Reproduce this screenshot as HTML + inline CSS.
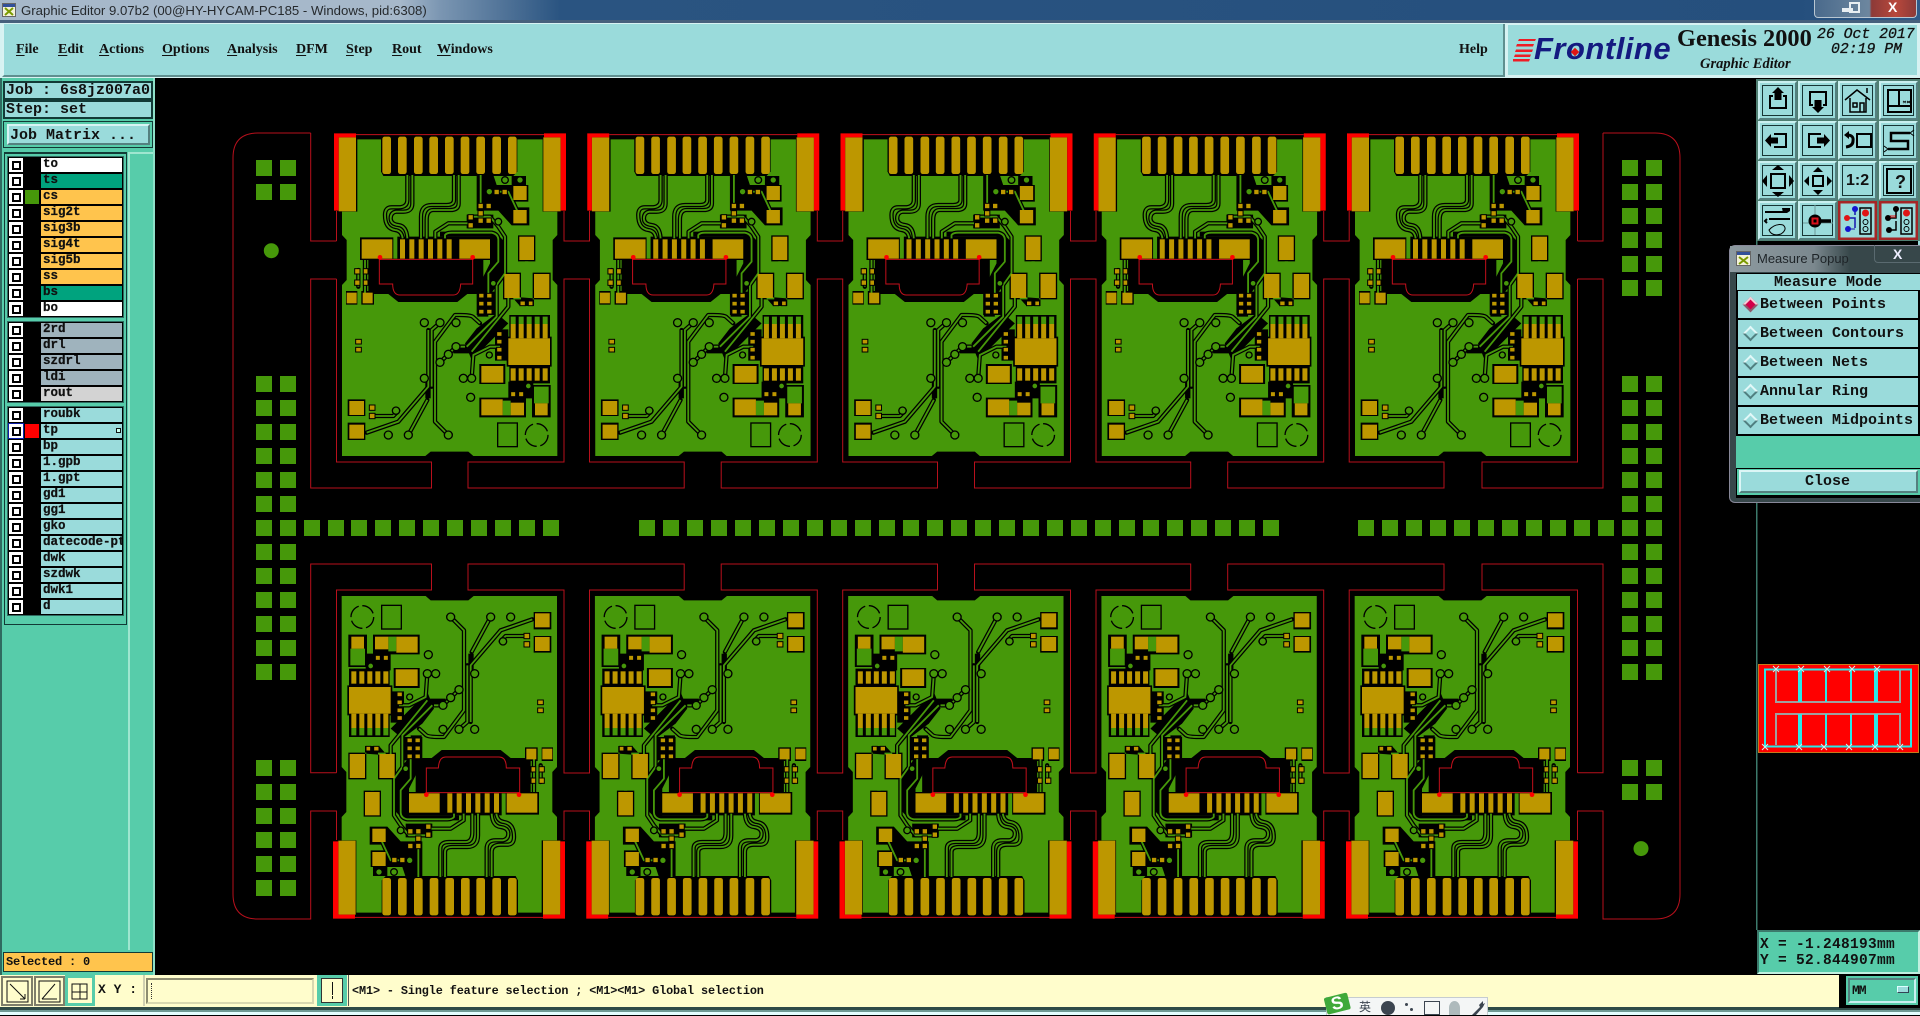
<!DOCTYPE html>
<html><head><meta charset="utf-8"><title>Graphic Editor</title>
<style>
html,body{margin:0;padding:0;background:#000;width:1920px;height:1015px;overflow:hidden}
div,span{position:absolute;box-sizing:border-box}
svg{position:absolute;left:0;top:0}
.m{font:bold 15px "Liberation Mono",monospace;color:#111;white-space:pre;line-height:16px}
.mn{font:bold 14px "Liberation Serif",serif;color:#111;top:42px;white-space:pre}
.mn u{text-underline-offset:2px}
.l{height:14px;width:81px;left:41px;font:bold 12.5px/13px "Liberation Mono",monospace;color:#111;padding-left:2px;overflow:hidden;white-space:pre;-webkit-text-stroke:.25px #111}
.cb{left:9px;width:14px;height:14px;background:#fff}
.cb:after{content:"";position:absolute;left:2.5px;top:2.5px;width:9px;height:9px;border:2px solid #000;box-sizing:border-box;background:#fff}
.g{left:7px;width:117px;background:#000;border:1px solid #2f6a60}
.w{background:#fff}.t{background:#00a37e}.o{background:#ffc44d}.b{background:#9fb3bd}.c{background:#9adbdb}
.r{left:1738px;width:180px;height:27px;background:#9adbdb}
.r .m{left:22px;top:6px}
.d{left:7px;top:8px;width:11px;height:11px;transform:rotate(45deg);background:#9adbdb;border:2px solid;border-color:#e2f8f8 #507f80 #507f80 #e2f8f8}
.bt{width:39px;height:39px;background:#9adbdb;border:2px solid;border-color:#c9f0f0 #54807f #54807f #c9f0f0}
.bt i{position:absolute;left:2px;top:2px;width:31px;height:31px;border:1.5px solid #173535;box-sizing:border-box;display:block}
.bt svg{left:-2px;top:-2px}
</style></head><body>

<!-- title bar -->
<div style="left:0;top:0;width:1920px;height:21px;background:linear-gradient(90deg,#a6b8ca 0,#a6b8ca 400px,#7b96b2 440px,#2a5481 560px,#254f7d 1800px,#2f5a88 1920px)"></div>
<div style="left:0;top:20px;width:1920px;height:3px;background:#46607c"></div>
<div style="left:0;top:23px;width:1920px;height:55px;background:#d7f2f2"></div>
<svg width="16" height="16" style="left:2px;top:3px"><rect x=".5" y=".5" width="13" height="13" fill="#f4f3d8" stroke="#666"/><rect x="1" y="1" width="12" height="3" fill="#32509a"/><path d="M3 5L11 12M11 5L3 12" stroke="#7a9a00" stroke-width="2"/></svg>
<div style="left:21px;top:2px;font:13.2px/17px 'Liberation Sans',sans-serif;color:#262a2e;white-space:pre">Graphic Editor 9.07b2 (00@HY-HYCAM-PC185 - Windows, pid:6308)</div>
<div style="left:1814px;top:0;width:103px;height:18px;background:linear-gradient(90deg,#4a6a8c 0,#6d879f 54%,#8c3a38 56%,#b8483c 80%,#8c3a38 100%);border:1px solid #b8c6d2;border-top:0;border-radius:0 0 4px 4px"></div>
<div style="left:1842px;top:8px;width:11px;height:4px;background:#e8eef2"></div>
<div style="left:1849px;top:2px;width:11px;height:11px;border:2px solid #e8eef2"></div>
<div style="left:1888px;top:0;font:bold 14px/15px 'Liberation Sans',sans-serif;color:#fff">X</div>

<!-- menu bar -->
<div style="left:2px;top:24px;width:1503px;height:53px;background:#9adbdb;border-left:2px solid #d9f3f3;border-right:2px solid #5f8f8f;border-bottom:2px solid #5f8f8f"></div>
<div class="mn" style="left:16px"><u>F</u>ile</div>
<div class="mn" style="left:58px"><u>E</u>dit</div>
<div class="mn" style="left:99px"><u>A</u>ctions</div>
<div class="mn" style="left:162px"><u>O</u>ptions</div>
<div class="mn" style="left:227px"><u>A</u>nalysis</div>
<div class="mn" style="left:296px"><u>D</u>FM</div>
<div class="mn" style="left:346px"><u>S</u>tep</div>
<div class="mn" style="left:392px"><u>R</u>out</div>
<div class="mn" style="left:437px"><u>W</u>indows</div>
<div class="mn" style="left:1459px">Help</div>

<!-- frontline panel -->
<div style="left:1508px;top:25px;width:409px;height:50px;background:#9adbdb"></div>
<svg width="30" height="30" style="left:1510px;top:36px"><path d="M9 3L26 3L25 5H8ZM7 8H24L23 10.500H6ZM6 13.500H23L22 16H5ZM5 18.500H21L20 21H4ZM3 23H20L19 25.500H3Z" fill="#ee1c25"/></svg>
<div style="left:1534px;top:31px;font:italic bold 31px/36px 'Liberation Sans',sans-serif;color:#141a80;white-space:pre;letter-spacing:.5px">Frontline</div>
<div style="left:1572px;top:49px;width:6px;height:6px;background:#e01414;transform:rotate(45deg)"></div>
<div style="left:1677px;top:26px;font:bold 24.400px/26px 'Liberation Serif',serif;color:#111;white-space:pre">Genesis 2000</div>
<div style="left:1700px;top:56px;font:italic bold 14.500px/16px 'Liberation Serif',serif;color:#111;white-space:pre">Graphic Editor</div>
<div class="m" style="left:1817px;top:27px;font-style:italic;font-weight:normal;font-size:14.800px;-webkit-text-stroke:.3px #111">26 Oct 2017</div>
<div class="m" style="left:1831px;top:42px;font-style:italic;font-weight:normal;font-size:14.800px;-webkit-text-stroke:.3px #111">02:19 PM</div>

<!-- left panel -->
<div style="left:0;top:78px;width:155px;height:897px;background:#57ccaa;border-left:2px solid #2f6a60;border-right:2px solid #8ee0c8"></div>
<div style="left:3px;top:81px;width:150px;height:19px;background:#9adbdb;border:2px solid #123a36"></div>
<div class="m" style="left:6px;top:83px">Job : 6s8jz007a0</div>
<div style="left:3px;top:100px;width:150px;height:19px;background:#9adbdb;border:2px solid #123a36"></div>
<div class="m" style="left:6px;top:102px">Step: set</div>
<div style="left:3px;top:121px;width:150px;height:27px;background:#57ccaa;border:1px solid #123a36"></div>
<div style="left:7px;top:124px;width:143px;height:21px;background:#9adbdb;border:2px solid;border-color:#d8f4f4 #54807f #54807f #d8f4f4"></div>
<div class="m" style="left:10px;top:127px;top:128px">Job Matrix ...</div>
<div style="left:128px;top:152px;width:25px;height:798px;background:#57ccaa;border-left:2px solid #9fe6d0;border-top:2px solid #9fe6d0"></div>
<div style="left:4px;top:152px;width:123px;height:473px;background:#57ccaa;border:1px solid #123a36;border-top:2px solid #123a36"></div>

<div class="g" style="top:156px;height:162px"></div>
<div class="g" style="top:321px;height:82px"></div>
<div class="g" style="top:406px;height:210px"></div>

<div class="cb" style="top:158px"></div><div class="l w" style="top:158px">to</div>
<div class="cb" style="top:174px"></div><div class="l t" style="top:174px">ts</div>
<div class="cb" style="top:190px"></div><div style="left:25px;top:190px;width:14px;height:14px;background:#46980a"></div><div class="l o" style="top:190px">cs</div>
<div class="cb" style="top:206px"></div><div class="l o" style="top:206px">sig2t</div>
<div class="cb" style="top:222px"></div><div class="l o" style="top:222px">sig3b</div>
<div class="cb" style="top:238px"></div><div class="l o" style="top:238px">sig4t</div>
<div class="cb" style="top:254px"></div><div class="l o" style="top:254px">sig5b</div>
<div class="cb" style="top:270px"></div><div class="l o" style="top:270px">ss</div>
<div class="cb" style="top:286px"></div><div class="l t" style="top:286px">bs</div>
<div class="cb" style="top:302px"></div><div class="l w" style="top:302px">bo</div>

<div class="cb" style="top:323px"></div><div class="l b" style="top:323px">2rd</div>
<div class="cb" style="top:339px"></div><div class="l b" style="top:339px">drl</div>
<div class="cb" style="top:355px"></div><div class="l b" style="top:355px">szdrl</div>
<div class="cb" style="top:371px"></div><div class="l b" style="top:371px">ldi</div>
<div class="cb" style="top:387px"></div><div class="l" style="top:387px;background:#d3d3d3">rout</div>

<div class="cb" style="top:408px"></div><div class="l c" style="top:408px">roubk</div>
<div style="left:8px;top:423px;width:16px;height:16px;background:#0b1ea8"></div><div class="cb" style="top:424px"></div><div style="left:25px;top:424px;width:14px;height:14px;background:#f00"></div><div class="l c" style="top:424px">tp</div>
<div style="left:116px;top:428px;width:5px;height:5px;border:1px solid #111;background:#cfe"></div>
<div class="cb" style="top:440px"></div><div class="l c" style="top:440px">bp</div>
<div class="cb" style="top:456px"></div><div class="l c" style="top:456px">1.gpb</div>
<div class="cb" style="top:472px"></div><div class="l c" style="top:472px">1.gpt</div>
<div class="cb" style="top:488px"></div><div class="l c" style="top:488px">gd1</div>
<div class="cb" style="top:504px"></div><div class="l c" style="top:504px">gg1</div>
<div class="cb" style="top:520px"></div><div class="l c" style="top:520px">gko</div>
<div class="cb" style="top:536px"></div><div class="l c" style="top:536px">datecode-pte</div>
<div class="cb" style="top:552px"></div><div class="l c" style="top:552px">dwk</div>
<div class="cb" style="top:568px"></div><div class="l c" style="top:568px">szdwk</div>
<div class="cb" style="top:584px"></div><div class="l c" style="top:584px">dwk1</div>
<div class="cb" style="top:600px"></div><div class="l c" style="top:600px">d</div>

<div style="left:3px;top:952px;width:150px;height:20px;background:#ffc44d;border:1px solid #123a36"></div>
<div class="m" style="left:6px;top:954px;font-size:12px;letter-spacing:-.2px">Selected : 0</div>

<!-- PCB canvas -->
<svg width="1920" height="1015" viewBox="0 0 1920 1015" style="pointer-events:none">
<defs>
<pattern id="p" width="24" height="24" patternUnits="userSpaceOnUse"><rect width="16" height="16" fill="#46980a"/></pattern>
<g id="tr">
<path d="M262 165V240Q262 262 235 262H215Q195 262 195 285Q195 325 225 330Q245 332 248 355"/>
<path d="M277 165V250Q277 275 250 275H228Q212 278 212 295Q212 312 235 315Q260 318 262 355"/>
<path d="M402 165V240Q402 255 380 255H335Q303 255 303 290V355"/>
<path d="M416 165V250Q416 270 390 270H340Q320 270 320 300V355"/>
<path d="M346 355V335L385 310H445"/>
<path d="M482 165V260"/>
<path d="M375 355V345Q380 338 395 338H515Q535 342 535 360V425L505 460V525"/>
<path d="M455 290H510L535 320L555 350V460L530 495V590L440 680"/>
<path d="M565 465V560L455 695"/>
<path d="M480 610L458 590Q450 585 420 585H405L345 665V905L385 945"/>
<path d="M360 608L335 630V800"/>
<path d="M325 630V800L235 905L140 938"/>
<path d="M322 840L265 945"/>
<path d="M155 888H220L235 872"/>
<path d="M360 727L385 703L408 680H435"/>
<path d="M430 775H455L460 705L510 680H540"/>
<path d="M530 215H565L600 290"/>
<path d="M115 450V500"/>
<path d="M135 420V525"/>
</g>
<g id="board">
<path fill="#46980a" d="M112 58H668V275H712V345L698 360V480L712 495V1008H460L445 995H332L316 1008H66V495L80 480V360L66 345V275H112Z"/>
<g fill="#000">
<path d="M183 44H592V155L580 168H190L183 155Z"/>
<path d="M470 165H520L530 195H575V168H618V195H625V245H580L590 262H628V316H575L535 272H470Z"/>
<path d="M440 284H520V325H440Z"/>
<path d="M360 335H525L556 368V465L505 530V590H472V520L490 470L510 430V350H360Z"/>
<path d="M120 352H220V420H120Z"/>
<path d="M232 350H520V420H232Z"/>
<path d="M145 416H490V505L470 522H442L412 546H235L205 522H145Z"/>
<path d="M78 513H112V554H78ZM124 513H162V554H124Z"/>
<path d="M470 515H525V585H470Z"/>
<path d="M549 458H603V538H549ZM638 458H692V538H638ZM575 530L600 558H642V535Z"/>
<path d="M594 346H646V424H594Z"/>
<path d="M568 585H690V655H568Z"/>
<path d="M560 650H695V740H560Z"/>
<path d="M568 735H690V790H568Z"/>
<path d="M525 628H565V722H525Z"/>
<path d="M435 670L470 625L530 580L565 610L455 720Z"/>
<path d="M478 732H556V792H478Z"/>
<path d="M478 833H618V892H478Z"/>
<path d="M636 795H692V892H636Z"/>
<path d="M565 785H640V835H565Z"/>
<path d="M83 838H136V888H83Z"/>
<path d="M83 908H136V960H83Z"/>
<path d="M316 770H332V835H316Z"/>
<path d="M400 675H450V700H400Z"/>
</g>
<path fill="#46980a" d="M548 842H572V848H572V886H548ZM642 800H686V850H642Z"/>
<path fill="none" stroke="#46980a" stroke-width="10" d="M620 424V458"/>
<g fill="none" stroke="#000" stroke-width="13" stroke-linecap="round" stroke-linejoin="round"><use href="#tr"/></g>
<g fill="none" stroke="#46980a" stroke-width="5.500" stroke-linejoin="round"><use href="#tr"/></g>
<!-- vias -->
<g fill="#46980a" stroke="#000" stroke-width="4">
<circle cx="313" cy="608" r="12"/><circle cx="360" cy="608" r="12"/><circle cx="408" cy="608" r="12"/><circle cx="408" cy="680" r="12"/><circle cx="385" cy="703" r="12"/><circle cx="360" cy="727" r="12"/><circle cx="313" cy="775" r="12"/><circle cx="430" cy="775" r="12"/><circle cx="455" cy="775" r="12"/><circle cx="452" cy="832" r="12"/><circle cx="205" cy="945" r="12"/><circle cx="265" cy="945" r="12"/><circle cx="385" cy="945" r="12"/><circle cx="535" cy="305" r="10"/><circle cx="555" cy="180" r="10"/><circle cx="600" cy="180" r="10"/><circle cx="508" cy="215" r="10"/><circle cx="228" cy="872" r="11"/><circle cx="520" cy="490" r="9"/><circle cx="508" cy="705" r="9"/><circle cx="625" cy="798" r="9"/>
</g>
<!-- gold -->
<g fill="#bd9700">
<rect x="187" y="50" width="26" height="112" rx="7"/><rect x="234" y="50" width="26" height="112" rx="7"/><rect x="282" y="50" width="26" height="112" rx="7"/><rect x="328" y="50" width="26" height="112" rx="7"/><rect x="375" y="50" width="26" height="112" rx="7"/><rect x="422" y="50" width="26" height="112" rx="7"/><rect x="469" y="50" width="26" height="112" rx="7"/><rect x="517" y="50" width="26" height="112" rx="7"/><rect x="564" y="50" width="26" height="112" rx="7"/>
<rect x="56" y="52" width="52" height="222"/><rect x="670" y="52" width="52" height="222"/>
<rect x="125" y="358" width="92" height="58"/><rect x="418" y="358" width="92" height="58"/>
<rect x="240" y="358" width="15" height="58"/><rect x="268" y="358" width="15" height="58"/><rect x="296" y="358" width="15" height="58"/><rect x="324" y="358" width="15" height="58"/><rect x="352" y="358" width="15" height="58"/><rect x="380" y="358" width="15" height="58"/>
<rect x="580" y="198" width="40" height="42"/><rect x="580" y="270" width="40" height="40"/>
<rect x="598" y="350" width="44" height="70"/><rect x="553" y="462" width="46" height="72"/><rect x="642" y="462" width="46" height="72"/>
<rect x="565" y="655" width="125" height="80"/>
<rect x="572" y="612" width="15" height="43"/><rect x="596" y="612" width="15" height="43"/><rect x="620" y="612" width="15" height="43"/><rect x="644" y="612" width="15" height="43"/><rect x="668" y="612" width="15" height="43"/>
<rect x="572" y="745" width="15" height="37"/><rect x="596" y="745" width="15" height="37"/><rect x="620" y="745" width="15" height="37"/><rect x="644" y="745" width="15" height="37"/><rect x="668" y="745" width="15" height="37"/>
<rect x="484" y="738" width="66" height="50"/><rect x="484" y="838" width="64" height="48"/><rect x="572" y="848" width="40" height="38"/><rect x="645" y="850" width="38" height="36"/>
<rect x="88" y="843" width="44" height="42"/><rect x="88" y="914" width="44" height="42"/>
<rect x="80" y="518" width="30" height="32"/><rect x="128" y="518" width="30" height="32"/>
</g>
<g fill="#bd9700" stroke="#000" stroke-width="3">
<rect x="107" y="658" width="17" height="14"/><rect x="107" y="682" width="17" height="14"/>
<rect x="104" y="446" width="16" height="16"/><rect x="104" y="480" width="16" height="16"/><rect x="130" y="446" width="14" height="16"/><rect x="130" y="480" width="14" height="16"/>
<rect x="148" y="855" width="17" height="16"/><rect x="148" y="880" width="17" height="16"/>
<rect x="474" y="250" width="16" height="16"/><rect x="498" y="250" width="16" height="16"/><rect x="474" y="272" width="16" height="16"/><rect x="498" y="294" width="16" height="16"/><rect x="474" y="294" width="16" height="16"/><rect x="444" y="284" width="16" height="16"/><rect x="444" y="308" width="16" height="16"/>
<rect x="522" y="208" width="16" height="16"/><rect x="546" y="208" width="16" height="16"/>
<rect x="476" y="520" width="16" height="14"/><rect x="500" y="520" width="16" height="14"/><rect x="476" y="544" width="16" height="14"/><rect x="500" y="544" width="16" height="14"/><rect x="476" y="568" width="16" height="14"/><rect x="500" y="568" width="16" height="14"/>
<rect x="530" y="635" width="16" height="14"/><rect x="530" y="658" width="16" height="14"/><rect x="530" y="682" width="16" height="14"/><rect x="530" y="706" width="16" height="14"/>
<rect x="600" y="543" width="16" height="14"/><rect x="625" y="543" width="14" height="14"/>
<rect x="572" y="815" width="15" height="15"/><rect x="596" y="815" width="15" height="15"/>
</g>
<path fill="#46980a" d="M572 590H587V612H572ZM596 590H611V612H596ZM620 590H635V612H620ZM644 590H659V612H644ZM668 590H683V612H668Z"/>
<rect x="533" y="909" width="59" height="71" fill="none" stroke="#000" stroke-width="4"/>
<circle cx="650" cy="945" r="34" fill="none" stroke="#000" stroke-width="4" stroke-dasharray="42 11"/>
<!-- red -->
<path fill="#f00" d="M42 40H108V52H56V272H42ZM672 40H738V272H722V52H672Z"/>
<path fill="none" stroke="#c3101c" stroke-width="3" d="M108 44H672M178 412V492H218Q218 525 240 525H400Q420 525 422 492H458V412M180 418H458"/>
<circle cx="180" cy="412" r="7" fill="#f00"/><circle cx="458" cy="412" r="7" fill="#f00"/>
</g>
</defs>

<!-- rout outline -->
<g fill="none" stroke="#b8101c" stroke-width="1">
<path d="M310.700 133H258Q233 133 233 158V894Q233 919 258 919H310.700V811H336.500V840M336.500 772.700H310.700V564H431.500V590H336.500V772.700M336.500 279H310.700V488H431.500V462H336.500V279M336.500 241H310.700V133"/>
<path d="M1603 133H1655Q1680 133 1680 158V894Q1680 919 1655 919H1603V811H1577.500V840M1577.500 772.700H1603V564H1482V590H1577.500V772.700M1577.500 279H1603V488H1482V462H1577.500V279M1577.500 241H1603V133"/>
<path d="M336.500 211V241M1577.500 211V241"/>
<path d="M468 488H684.200V462H589.500V279H564V462H468ZM721.200 488H937.500V462H842.700V279H817.300V462H721.200ZM974.500 488H1190.700V462H1096V279H1070.500V462H974.500ZM1227.700 488H1444V462H1349.200V279H1323.700V462H1227.700Z"/>
<path d="M468 564H684.200V590H589.500V773H564V590H468ZM721.200 564H937.500V590H842.700V773H817.300V590H721.200ZM974.500 564H1190.700V590H1096V773H1070.500V590H974.500ZM1227.700 564H1444V590H1349.200V773H1323.700V590H1227.700Z"/>
<path d="M564 211V241H589.500V211M817.300 211V241H842.700V211M1070.500 211V241H1096V211M1323.700 211V241H1349.200V211"/>
<path d="M564 840V811H589.500V840M817.300 840V811H842.700V840M1070.500 840V811H1096V840M1323.700 840V811H1349.200V840"/>
</g>

<!-- pads -->
<rect x="0" y="0" width="40" height="40" transform="translate(256 160)" fill="url(#p)"/>
<rect x="0" y="0" width="40" height="304" transform="translate(256 376)" fill="url(#p)"/>
<rect x="0" y="0" width="40" height="136" transform="translate(256 760)" fill="url(#p)"/>
<rect x="0" y="0" width="40" height="136" transform="translate(1622 160)" fill="url(#p)"/>
<rect x="0" y="0" width="40" height="304" transform="translate(1622 376)" fill="url(#p)"/>
<rect x="0" y="0" width="40" height="40" transform="translate(1622 760)" fill="url(#p)"/>
<rect x="0" y="0" width="40" height="16" transform="translate(304 520)" fill="url(#p)"/>
<rect x="0" y="0" width="208" height="16" transform="translate(351 520)" fill="url(#p)"/>
<rect x="0" y="0" width="640" height="16" transform="translate(639 520)" fill="url(#p)"/>
<rect x="0" y="0" width="256" height="16" transform="translate(1358 520)" fill="url(#p)"/>
<circle cx="271.300" cy="250.700" r="7.500" fill="#46980a"/>
<circle cx="1641" cy="848.600" r="7.500" fill="#46980a"/>

<use href="#board" transform="translate(320 120) scale(.33333)"/>
<use href="#board" transform="translate(573.250 120) scale(.33333)"/>
<use href="#board" transform="translate(826.500 120) scale(.33333)"/>
<use href="#board" transform="translate(1079.750 120) scale(.33333)"/>
<use href="#board" transform="translate(1333 120) scale(.33333)"/>
<use href="#board" transform="translate(579 932) scale(-.33333)"/>
<use href="#board" transform="translate(832.250 932) scale(-.33333)"/>
<use href="#board" transform="translate(1085.500 932) scale(-.33333)"/>
<use href="#board" transform="translate(1338.750 932) scale(-.33333)"/>
<use href="#board" transform="translate(1592 932) scale(-.33333)"/>

<!-- right column lines -->
<rect x="1756" y="240" width="1.500" height="690" fill="#3c7a6c"/>
<rect x="1918" y="240" width="2" height="20" fill="#9adbdb"/>

<!-- minimap -->
<rect x="1758.500" y="664.500" width="160" height="88" fill="#f00" stroke="#c7791a"/>
<g fill="none" stroke="#a0a0a0" stroke-width="2">
<path d="M1776 670V702H1900V670M1776 745V714H1900V745"/><path d="M1800 670V702M1826 670V702M1851 670V702M1800 714V745M1826 714V745M1851 714V745"/>
</g>
<g fill="none" stroke="#2ae8e8" stroke-width="2">
<path d="M1765 669.500H1911V746.500H1765Z"/>
<path d="M1826 670V702M1851 670V702M1826 714V745M1851 714V745" />
</g>
<path d="M1800 668V702M1876 668V702M1800 714V746M1876 714V746" stroke="#2ae8e8" stroke-width="4"/>
<g stroke="#d0f0f0" stroke-width="1"><path d="M1773 666L1779 672M1779 666L1773 672M1798 666L1804 672M1804 666L1798 672M1824 666L1830 672M1830 666L1824 672M1849 666L1855 672M1855 666L1849 672M1874 666L1880 672M1880 666L1874 672M1762 744L1768 750M1768 744L1762 750M1796 744L1802 750M1802 744L1796 750M1821 744L1827 750M1827 744L1821 750M1846 744L1852 750M1852 744L1846 750M1872 744L1878 750M1878 744L1872 750M1897 744L1903 750M1903 744L1897 750"/></g>
</svg>

<!-- tool buttons -->
<div style="left:1756px;top:79px;width:164px;height:162px;background:#4f7f72"></div>
<div class="bt" style="left:1758px;top:81px"><i></i><svg width="39" height="39"><path d="M15 15H12V27H28V15H25" fill="none" stroke="#000" stroke-width="2"/><path d="M20 6L26 12H23.500V19H16.500V12H14Z"/></svg></div>
<div class="bt" style="left:1798px;top:81px"><i></i><svg width="39" height="39"><path d="M15 24H12V11H28V24H25" fill="none" stroke="#000" stroke-width="2"/><path d="M20 32L26 26H23.500V19H16.500V26H14Z"/></svg></div>
<div class="bt" style="left:1838px;top:81px"><i></i><svg width="39" height="39"><path d="M7 19L19 9L32 19M12 17V31H28V17M29 12V7M15 22H19V26H15ZM22 22H26V31H22Z" fill="none" stroke="#000" stroke-width="1.500"/></svg></div>
<div class="bt" style="left:1879px;top:81px"><i></i><svg width="39" height="39"><path d="M9 9H32V31H9ZM20 9V25M9 25H32" fill="none" stroke="#000" stroke-width="2"/><path d="M24 20L27 22M27 20L24 22M28 20L31 22M31 20L28 22" stroke="#000" stroke-width=".8"/></svg></div>

<div class="bt" style="left:1758px;top:121px"><i></i><svg width="39" height="39"><path d="M16 13H28V26H16" fill="none" stroke="#000" stroke-width="2"/><path d="M7 19.500L13 13V16.500H20V22.500H13V26Z"/></svg></div>
<div class="bt" style="left:1798px;top:121px"><i></i><svg width="39" height="39"><path d="M23 13H11V26H23" fill="none" stroke="#000" stroke-width="2"/><path d="M32 19.500L26 13V16.500H19V22.500H26V26Z"/></svg></div>
<div class="bt" style="left:1838px;top:121px"><i></i><svg width="39" height="39"><rect x="19" y="13" width="14" height="13" fill="none" stroke="#000" stroke-width="2"/><path d="M9 14Q16 14 15 20Q15 25 8 26" fill="none" stroke="#000" stroke-width="3"/><path d="M6 14L11 10V18Z"/></svg></div>
<div class="bt" style="left:1879px;top:121px"><i></i><svg width="39" height="39"><path d="M31 12H12V20H29V28H9" fill="none" stroke="#000" stroke-width="2.500"/><path d="M35 9L31 12L35 15M5 25L9 28L5 31" fill="none" stroke="#000"/></svg></div>

<div class="bt" style="left:1758px;top:161px"><i></i><svg width="39" height="39"><rect x="13" y="13" width="14" height="14" fill="none" stroke="#000" stroke-width="2"/><path d="M20 4L26 9H14ZM20 36L26 31H14ZM4 20L9 14V26ZM36 20L31 14V26Z"/></svg></div>
<div class="bt" style="left:1798px;top:161px"><i></i><svg width="39" height="39"><rect x="15" y="15" width="10" height="10" fill="none" stroke="#000" stroke-width="2"/><path d="M20 6L25 11H15ZM20 34L25 29H15ZM6 20L11 15V25ZM34 20L29 15V25Z"/></svg></div>
<div class="bt" style="left:1838px;top:161px"><i></i><div style="left:6px;top:9px;font:bold 16px/18px 'Liberation Sans',sans-serif;color:#111">1:2</div></div>
<div class="bt" style="left:1879px;top:161px"><i></i><svg width="39" height="39"><rect x="8" y="8" width="24" height="24" fill="none" stroke="#000" stroke-width="2"/></svg><div style="left:14px;top:9px;font:bold 18px/20px 'Liberation Sans',sans-serif;color:#111">?</div></div>

<div class="bt" style="left:1758px;top:201px"><i></i><svg width="39" height="39"><path d="M7 11H25M11 18H32M9 18L7 20L9 22" stroke="#000" stroke-width="2" fill="none"/><path d="M24 7H32V10L29 12H25Z"/><path d="M11 29Q17 22 25 24Q30 28 23 33Q14 36 11 29Z" fill="none" stroke="#000"/></svg></div>
<div class="bt" style="left:1798px;top:201px"><i></i><svg width="39" height="39"><path d="M17 4V34M5 22H35" stroke="#6d9a9a"/><path d="M22 20H33" stroke="#000" stroke-width="3.500"/><circle cx="17" cy="20" r="6.500"/><rect x="13.500" y="16.500" width="7" height="7" fill="#d8101c"/><rect x="15.500" y="18.500" width="3" height="3"/></svg></div>
<div class="bt" style="left:1838px;top:201px;border-color:#b02a2a;background:#9adbdb"><svg width="39" height="39"><rect x="1" y="1" width="37" height="37" fill="none" stroke="#a62626" stroke-width="3"/><path d="M9 17H17V27M15 9H17V14" stroke="#1414b0" stroke-width="1.500" fill="none"/><circle cx="17" cy="8" r="3" fill="#1414d0"/><circle cx="9" cy="17" r="3" fill="#e01414"/><circle cx="10" cy="28" r="3" fill="#1414d0"/><path d="M10 28H17" stroke="#1414b0"/><rect x="22" y="7" width="11" height="26" fill="none" stroke="#000" stroke-width="1.500"/><circle cx="27.500" cy="12" r="3.500" fill="#e01414"/><circle cx="27.500" cy="21" r="2.500" fill="none" stroke="#000"/><circle cx="27.500" cy="28" r="2.500" fill="none" stroke="#000"/></svg></div>
<div class="bt" style="left:1879px;top:201px;background:#9adbdb"><svg width="39" height="39"><rect x="1" y="1" width="37" height="37" fill="none" stroke="#a62626" stroke-width="3"/><path d="M9 17H17V8M10 29H17V20" stroke="#000" stroke-width="1.500" fill="none"/><circle cx="17" cy="8" r="3"/><circle cx="9" cy="17" r="3"/><circle cx="10" cy="29" r="3"/><path d="M12 17V14M14 17V14M16 17V14" stroke="#e01414"/><rect x="22" y="7" width="11" height="26" fill="none" stroke="#000" stroke-width="1.500"/><circle cx="27.500" cy="12" r="3.500" fill="#e01414"/><circle cx="27.500" cy="21" r="2.500" fill="none" stroke="#000"/><circle cx="27.500" cy="28" r="2.500" fill="none" stroke="#000"/></svg></div>

<!-- measure popup -->
<div style="left:1729px;top:245px;width:191px;height:258px;background:#37474a;border:1px solid #889;border-right:0;border-radius:6px 0 0 6px"></div>
<div style="left:1730px;top:246px;width:120px;height:26px;background:linear-gradient(90deg,#8d9aa0,#7b888e 70%,#37474a)"></div>
<svg width="16" height="16" style="left:1736px;top:251px"><rect x=".5" y=".5" width="14" height="14" fill="#f4f3d8" stroke="#666"/><rect x="1" y="1" width="13" height="3" fill="#32509a"/><path d="M3 6L12 13M12 6L3 13" stroke="#7a9a00" stroke-width="2"/></svg>
<div style="left:1757px;top:250px;font:13px/17px 'Liberation Sans',sans-serif;color:#1e2428;white-space:pre">Measure Popup</div>
<div style="left:1874px;top:245px;width:46px;height:18px;border:1px solid #5a6a70;border-top:0;border-right:0;border-radius:0 0 0 4px"></div>
<div style="left:1893px;top:247px;font:bold 14px/15px 'Liberation Sans',sans-serif;color:#eef">X</div>
<div style="left:1736px;top:273px;width:184px;height:225px;background:#000"></div>
<div style="left:1737px;top:274px;width:183px;height:16px;background:#9adbdb"></div>
<div class="m" style="left:1774px;top:275px">Measure Mode</div>
<div class="r" style="top:291px"><div class="d" style="background:#d2004a;border-color:#f4d0d8 #8c5a6a #8c5a6a #f4d0d8"></div><div class="m">Between Points</div></div>
<div class="r" style="top:320px"><div class="d"></div><div class="m">Between Contours</div></div>
<div class="r" style="top:349px"><div class="d"></div><div class="m">Between Nets</div></div>
<div class="r" style="top:378px"><div class="d"></div><div class="m">Annular Ring</div></div>
<div class="r" style="top:407px"><div class="d"></div><div class="m">Between Midpoints</div></div>
<div style="left:1736px;top:436px;width:184px;height:32px;background:#57ccaa"></div>
<div style="left:1737px;top:469px;width:183px;height:26px;background:#57ccaa"></div>
<div style="left:1739px;top:470px;width:179px;height:23px;background:#9adbdb;border:2px solid;border-color:#dcf6f6 #54807f #54807f #dcf6f6"></div>
<div class="m" style="left:1805px;top:474px">Close</div>

<!-- coords -->
<div style="left:1757px;top:930px;width:163px;height:44px;background:#57ccaa;border:2px solid;border-color:#3c7a6c #c0f0e0 #c0f0e0 #3c7a6c"></div>
<div class="m" style="left:1760px;top:937px;font-size:14.500px;letter-spacing:.3px;line-height:16px">X = -1.248193mm
Y = 52.844907mm</div>

<!-- status bar -->
<div style="left:0;top:975px;width:1920px;height:33px;background:#fffdcc"></div>
<div style="left:0;top:1007px;width:1920px;height:3px;background:#2f4a46"></div>
<div style="left:0;top:1010px;width:1920px;height:2px;background:#6f9a94"></div>
<div style="left:0;top:1012px;width:1920px;height:3px;background:#e4ffff"></div>
<div style="left:1px;top:976px;width:32px;height:30px;border:2px solid #7e7e6a;background:#fffdcc"></div>
<svg width="24" height="24" style="left:6px;top:980px"><rect x="1" y="1" width="21" height="21" fill="none" stroke="#111"/><path d="M4 4L19 19M19 19V14M19 19H14" stroke="#111" fill="none"/></svg>
<div style="left:34px;top:976px;width:31px;height:30px;border:2px solid #7e7e6a;background:#fffdcc"></div>
<svg width="24" height="24" style="left:38px;top:980px"><rect x="1" y="1" width="21" height="21" fill="none" stroke="#111"/><path d="M4 19L17 4M4 19H19" stroke="#111" fill="none"/></svg>
<div style="left:65px;top:975px;width:30px;height:31px;background:#57ccaa;border:3px solid #57ccaa"><div style="left:0;top:0;width:24px;height:25px;background:#fffdcc"></div></div>
<svg width="20" height="20" style="left:70px;top:982px"><path d="M2 2H17V17H2ZM10 2V17M2 10H17" fill="none" stroke="#111"/></svg>
<div class="m" style="left:98px;top:982px;font-size:13px">X Y :</div>
<div style="left:143px;top:975px;width:2px;height:31px;background:#d0d0b0"></div>
<div style="left:146px;top:978px;width:168px;height:26px;border:2px solid;border-color:#8d8d70 #d8d8b0 #d8d8b0 #8d8d70;background:#fffdcc"></div>
<div style="left:151px;top:983px;width:2px;height:16px;border-left:1px dotted #333"></div>
<div style="left:317px;top:975px;width:30px;height:31px;background:#57ccaa"><div style="left:4px;top:3px;width:22px;height:25px;background:#fffdcc;border:1px solid #333"></div><div style="left:14.500px;top:7px;width:1.500px;height:13px;background:#111"></div><div style="left:14.500px;top:21px;width:1.500px;height:3px;background:#111"></div></div>
<div style="left:348px;top:975px;width:1px;height:31px;background:#555"></div>
<div class="m" style="left:352px;top:984px;font-size:11.800px;letter-spacing:-.1px;line-height:14px">&lt;M1&gt; - Single feature selection ; &lt;M1&gt;&lt;M1&gt; Global selection</div>

<!-- MM option -->
<div style="left:1839px;top:975px;width:81px;height:33px;background:#000"></div>
<div style="left:1846px;top:976px;width:72px;height:29px;background:#57ccaa"></div>
<div style="left:1848px;top:978px;width:68px;height:25px;border:2px solid;border-color:#54807f #c9f0f0 #c9f0f0 #54807f;background:#57ccaa"></div>
<div class="m" style="left:1852px;top:983px;font-size:13px;letter-spacing:-1px">MM</div>
<div style="left:1897px;top:986px;width:12px;height:7px;background:#9adbdb;border:1px solid;border-color:#dff #345 #345 #dff"></div>

<!-- IME bar -->
<div style="left:1326px;top:997px;width:162px;height:18px;background:#f4f6f6;border:1px solid #c6ccd0;border-bottom:0"></div>
<div style="left:1326px;top:998px;width:24px;height:17px;background:#3fa93a;transform:rotate(-14deg) translateY(-3px);border-radius:2px;color:#fff;font:bold 18px/16px 'Liberation Sans',sans-serif;text-align:center">S</div>
<div style="left:1359px;top:1000px;font:12px/13px 'Noto Sans CJK SC',sans-serif;color:#3c4550">英</div>
<div style="left:1381px;top:1001px;width:14px;height:14px;border-radius:50%;background:#3c4550"></div>
<div style="left:1405px;top:1003px;width:3px;height:3px;border-radius:50%;background:#3c4550"></div>
<div style="left:1410px;top:1008px;width:3px;height:3px;border-radius:50%;background:#3c4550"></div>
<div style="left:1424px;top:1001px;width:16px;height:14px;border:1.500px solid #3c4550"></div>
<div style="left:1449px;top:1001px;width:11px;height:14px;background:#aebabc;border-radius:50% 50% 0 0"></div>
<svg width="16" height="15" style="left:1470px;top:1000px"><path d="M13 1L9 5L10 7L2 15H6L13 7L15 3L13 4Z" fill="#3c4550"/></svg>
</body></html>
